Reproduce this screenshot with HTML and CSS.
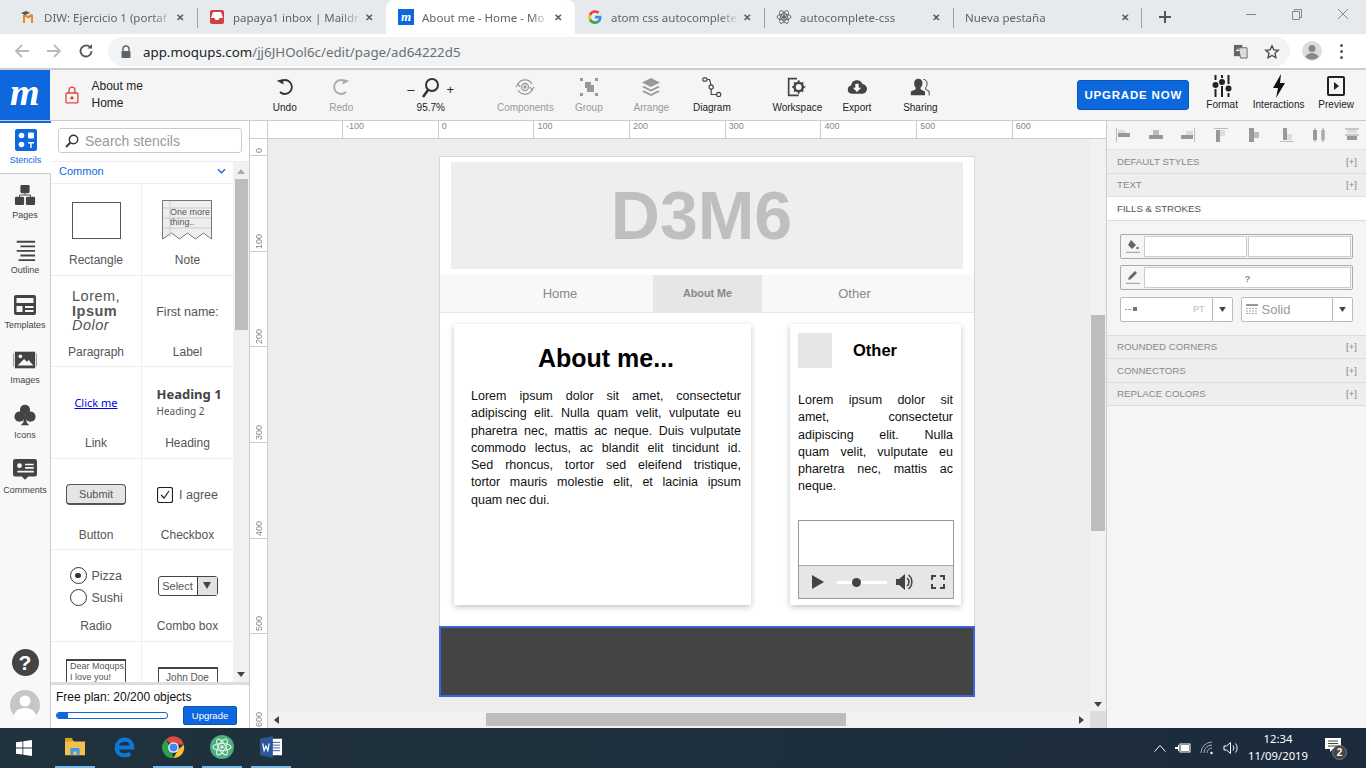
FILE: index.html
```html
<!DOCTYPE html>
<html lang="es">
<head>
  <meta charset="UTF-8" />
  <title>About me - Home - Moqups</title>
  <link rel="stylesheet" href="styles.css">
</head>
<body>
  <!-- Pestañas del navegador -->
  <div class="tabs">
    <div class="tab">
      <svg class="fav" viewBox="0 0 16 16"><path d="M3 14V6l2-1 3 2 3-2 2 1v8h-2V8L8.500 9.500 8 9 5 8v6z" fill="#e8892b"/><path d="M1 4l5-2 4 2-5 2z" fill="#555"/></svg>
      <span class="tab-title">DIW: Ejercicio 1 (portaf</span><span class="tab-x">✕</span>
    </div>
    <div class="tab sep">
      <svg class="fav" viewBox="0 0 16 16"><path d="M1 3a2 2 0 0 1 2-2h10a2 2 0 0 1 2 2v10a2 2 0 0 1-2 2H3a2 2 0 0 1-2-2z" fill="#d23f3f"/><path d="M4 3h8l2 6h-3.500l-1 2h-3l-1-2H2z" fill="#fff"/></svg>
      <span class="tab-title">papaya1 inbox | Maildr</span><span class="tab-x">✕</span>
    </div>
    <div class="tab active">
      <span class="fav fav-m">m</span>
      <span class="tab-title">About me - Home - Mo</span><span class="tab-x">✕</span>
    </div>
    <div class="tab">
      <svg class="fav" viewBox="0 0 16 16"><path d="M14.500 8.200c0-.5 0-1-.1-1.400H8v2.700h3.700a3.200 3.200 0 0 1-1.400 2.100l2.200 1.700c1.300-1.200 2-3 2-5.100z" fill="#4285f4"/><path d="M8 15c1.900 0 3.400-.6 4.500-1.700l-2.200-1.700c-.6.400-1.400.7-2.300.7a4 4 0 0 1-3.800-2.800L1.900 11.200A7 7 0 0 0 8 15z" fill="#34a853"/><path d="M4.200 9.500a4 4 0 0 1 0-2.700L1.900 5a7 7 0 0 0 0 6.200z" fill="#fbbc05"/><path d="M8 3.800c1 0 1.900.4 2.600 1l2-2A7 7 0 0 0 1.900 5l2.300 1.800A4 4 0 0 1 8 3.800z" fill="#ea4335"/></svg>
      <span class="tab-title">atom css autocomplete</span><span class="tab-x">✕</span>
    </div>
    <div class="tab sep">
      <svg class="fav" viewBox="0 0 16 16" fill="none" stroke="#666" stroke-width="1"><ellipse cx="8" cy="8" rx="7" ry="3" transform="rotate(60 8 8)"/><ellipse cx="8" cy="8" rx="7" ry="3" transform="rotate(-60 8 8)"/><ellipse cx="8" cy="8" rx="7" ry="3"/><circle cx="8" cy="8" r="1.500" fill="#666"/></svg>
      <span class="tab-title">autocomplete-css</span><span class="tab-x">✕</span>
    </div>
    <div class="tab sep last">
      <span class="tab-title new">Nueva pestaña</span><span class="tab-x">✕</span>
    </div>
    <span class="tab-plus">
      <svg viewBox="0 0 12 12" width="12" height="12"><path d="M6 0v12M0 6h12" stroke="#555" stroke-width="2"/></svg>
    </span>
    <div class="win-btns">
      <svg viewBox="0 0 12 12" width="12" height="12"><path d="M1 6.500h10" stroke="#888"/></svg>
      <svg viewBox="0 0 12 12" width="12" height="12" fill="none" stroke="#888"><path d="M1.500 3.500h7v8h-7zM3.500 3.500v-2h7v8h-2"/></svg>
      <svg viewBox="0 0 12 12" width="12" height="12"><path d="M1 1l10 10M11 1L1 11" stroke="#888"/></svg>
    </div>
  </div>

  <!-- Barra de direcciones -->
  <div class="urlbar">
    <svg class="nav-ic" viewBox="0 0 16 16" fill="none" stroke="#bbb" stroke-width="1.800"><path d="M15 8H2M8 2L2 8l6 6"/></svg>
    <svg class="nav-ic" viewBox="0 0 16 16" fill="none" stroke="#bbb" stroke-width="1.800"><path d="M1 8h13M8 2l6 6-6 6"/></svg>
    <svg class="nav-ic" viewBox="0 0 16 16" fill="none" stroke="#555" stroke-width="1.800"><path d="M13.500 8a5.500 5.500 0 1 1-1.600-3.900"/><path d="M14 1v4.500H9.500z" fill="#555" stroke="none"/></svg>
    <div class="omnibox">
      <svg class="lock" viewBox="0 0 12 14"><path d="M3 6V4a3 3 0 0 1 6 0v2" fill="none" stroke="#5f6368" stroke-width="1.400"/><rect x="1.500" y="6" width="9" height="7" rx="1" fill="#5f6368"/></svg>
      <span class="url"><b>app.moqups.com</b>/jj6JHOol6c/edit/page/ad64222d5</span>
      <svg class="omni-ic" viewBox="0 0 16 16"><path d="M1 1h9v12H1z" fill="#666"/><path d="M6 4h9v11H8z" fill="#ddd" stroke="#666"/><path d="M3 7h4M5 5v2" stroke="#fff"/></svg>
      <svg class="omni-ic star" viewBox="0 0 16 16" fill="none" stroke="#444" stroke-width="1.300"><path d="M8 1.800l1.900 4 4.400.5-3.300 3 .9 4.400L8 11.500l-3.900 2.200.9-4.400-3.300-3 4.400-.5z"/></svg>
    </div>
    <span class="profile">
      <svg viewBox="0 0 20 20" width="20" height="20"><circle cx="10" cy="10" r="10" fill="#ddd"/><circle cx="10" cy="7.500" r="3.500" fill="#888"/><path d="M3.500 16c1-3 4-4 6.500-4s5.500 1 6.500 4a9 9 0 0 1-13 0z" fill="#888"/></svg>
    </span>
    <span class="dots"><i></i><i></i><i></i></span>
  </div>

  <!-- Barra de herramientas de Moqups -->
  <div class="toolbar">
    <div class="logo">m</div>
    <svg class="red-lock" viewBox="0 0 14 18" fill="none" stroke="#d9453a" stroke-width="1.300"><rect x="1" y="7" width="12" height="10" rx="1"/><path d="M4 7V4a3 3 0 0 1 6 0v3"/><circle cx="7" cy="12" r="1" fill="#d9453a"/></svg>
    <div class="doc-name"><span>About me</span><span>Home</span></div>

    <div class="tool t-undo">
      <svg viewBox="0 0 20 20" fill="none" stroke="#333" stroke-width="1.800"><path d="M5 5a7 7 0 1 1 0 10"/><path d="M2 3h6v5.500z" fill="#333" stroke="none" transform="rotate(-15 5 5)"/></svg>
      <span>Undo</span>
    </div>
    <div class="tool t-redo off">
      <svg viewBox="0 0 20 20" fill="none" stroke="#aaa" stroke-width="1.800"><path d="M15 5a7 7 0 1 0 0 10"/><path d="M18 3h-6v5.500z" fill="#aaa" stroke="none" transform="rotate(15 15 5)"/></svg>
      <span>Redo</span>
    </div>
    <div class="tool t-zoom">
      <div class="zoom-row">
        <b>–</b>
        <svg viewBox="0 0 20 22" fill="none" stroke="#333" stroke-width="2"><circle cx="11" cy="8" r="6"/><path d="M7 13l-5 7" stroke-width="2.500"/></svg>
        <b>+</b>
      </div>
      <span>95.7%</span>
    </div>
    <div class="tool t-comp off">
      <svg viewBox="0 0 20 20" fill="none" stroke="#999" stroke-width="1.300"><path d="M3 7a8 8 0 0 1 14 0M17 13a8 8 0 0 1-14 0"/><circle cx="10" cy="10" r="3.500"/><circle cx="10" cy="10" r="1" fill="#999"/><path d="M1 10l2-3 2 3M15 10l2 3 2-3"/></svg>
      <span>Components</span>
    </div>
    <div class="tool t-group off">
      <svg viewBox="0 0 20 20" fill="#999"><rect x="1" y="1" width="3" height="3"/><rect x="16" y="1" width="3" height="3"/><rect x="1" y="16" width="3" height="3"/><rect x="16" y="16" width="3" height="3"/><rect x="6" y="5" width="6" height="6"/><rect x="8" y="8" width="7" height="7"/></svg>
      <span>Group</span>
    </div>
    <div class="tool t-arrange off">
      <svg viewBox="0 0 20 20" fill="#999"><path d="M10 1l9 4.500-9 4.500-9-4.500z"/><path d="M3 9l7 3.500L17 9l2 1-9 4.500L1 10z"/><path d="M3 13.500L10 17l7-3.500 2 1L10 19l-9-4.500z"/></svg>
      <span>Arrange</span>
    </div>
    <div class="tool t-diagram">
      <svg viewBox="0 0 24 24" fill="none" stroke="#444" stroke-width="1.400"><rect x="1" y="1" width="5" height="4" rx="1.500"/><circle cx="11" cy="12" r="2.500"/><circle cx="20" cy="21" r="2.500"/><path d="M6 3h3l2 7M11 14.500V21h6.500"/></svg>
      <span>Diagram</span>
    </div>
    <div class="tool t-work">
      <svg viewBox="0 0 24 24"><path d="M12 2H2v20h12" fill="none" stroke="#444" stroke-width="2"/><circle cx="14" cy="12" r="5" fill="none" stroke="#444" stroke-width="3"/><path d="M14 4v3M14 17v3M6 12h3M19 12h3M8.500 6.500l2 2M17.500 15.500l2 2M19.500 6.500l-2 2M10.500 15.500l-2 2" stroke="#444" stroke-width="2"/></svg>
      <span>Workspace</span>
    </div>
    <div class="tool t-export">
      <svg viewBox="0 0 24 20"><path d="M6 18a5 5 0 0 1-1-9.900A7 7 0 0 1 18.500 6.500 5.700 5.700 0 0 1 18 18z" fill="#444"/><path d="M10 6h4v5h3l-5 5-5-5h3z" fill="#fff"/></svg>
      <span>Export</span>
    </div>
    <div class="tool t-share">
      <svg viewBox="0 0 24 24"><path d="M10 2c3 0 5 2 5 5 0 3-1 5-2.500 6l.5 2 5 2.500V22H1v-4.500L6.500 15l.5-2C5.500 12 5 10 5 7c0-3 2-5 5-5z" fill="#444"/><path d="M16 3c3 0 4.500 2 4.500 5 0 3-1 4-2 5l.5 2 4 2v5" fill="none" stroke="#444" stroke-width="1.200"/></svg>
      <span>Sharing</span>
    </div>

    <button class="btn-upgrade">UPGRADE NOW</button>

    <div class="tool-r r-format">
      <svg viewBox="0 0 20 24" fill="#222"><rect x="2.500" y="1" width="2" height="5"/><rect x="2.500" y="15" width="2" height="8"/><circle cx="3.500" cy="11" r="3"/><rect x="9" y="1" width="2" height="3"/><rect x="9" y="12" width="2" height="11"/><circle cx="10" cy="8" r="3"/><rect x="15.500" y="1" width="2" height="9"/><rect x="15.500" y="19" width="2" height="4"/><circle cx="16.500" cy="14.500" r="3"/></svg>
      <span>Format</span>
    </div>
    <div class="tool-r r-inter">
      <svg viewBox="0 0 14 24" fill="#111"><path d="M9 0L1 14h5l-2 10 9-15H8z"/></svg>
      <span>Interactions</span>
    </div>
    <div class="tool-r r-prev">
      <svg viewBox="0 0 20 24"><rect x="2" y="3" width="16" height="18" rx="1" fill="none" stroke="#222" stroke-width="2"/><path d="M8 8l5 4-5 4z" fill="#222"/></svg>
      <span>Preview</span>
    </div>
  </div>

  <div class="main">
    <!-- Barra lateral izquierda -->
    <aside class="side">
      <div class="side-item on">
        <svg viewBox="0 0 22 22"><rect width="22" height="22" rx="2" fill="#0d68dd"/><circle cx="6.500" cy="6.500" r="2.800" fill="#fff"/><rect x="13" y="3.500" width="6" height="6" rx="1" fill="#fff"/><circle cx="6.500" cy="15.500" r="2.800" fill="#fff"/><path d="M13 13h6v1.500h-2.300V19h-1.400v-4.500H13z" fill="#fff"/></svg>
        <span>Stencils</span>
      </div>
      <div class="side-item">
        <svg viewBox="0 0 24 24" fill="#444"><rect x="7" y="1" width="10" height="9" rx="1.500"/><rect x="1" y="14" width="10" height="9" rx="1.500"/><rect x="13" y="14" width="10" height="9" rx="1.500"/><path d="M12 10v2M6 14v-2h12v2" fill="none" stroke="#444"/></svg>
        <span>Pages</span>
      </div>
      <div class="side-item">
        <svg viewBox="0 0 24 24" stroke="#444" stroke-width="2"><path d="M3 3h20M7 8h16M3 13h20M7 18h16M5 23h18"/></svg>
        <span>Outline</span>
      </div>
      <div class="side-item">
        <svg viewBox="0 0 24 22"><rect x="1" y="1" width="22" height="20" rx="2" fill="#444"/><rect x="3.500" y="4" width="17" height="5" fill="#f8f8f8"/><rect x="3.500" y="12" width="6" height="6" fill="#f8f8f8"/><rect x="12" y="12" width="8.500" height="2" fill="#f8f8f8"/><rect x="12" y="16" width="8.500" height="2" fill="#f8f8f8"/></svg>
        <span>Templates</span>
      </div>
      <div class="side-item">
        <svg viewBox="0 0 26 20"><rect x="2" y="1" width="22" height="18" fill="#444"/><path d="M0 3v14M26 3v14" stroke="#444" stroke-width="1"/><circle cx="8" cy="6" r="2" fill="#f8f8f8"/><path d="M5 16l7-7 3 3 2-2 5 6z" fill="#f8f8f8"/></svg>
        <span>Images</span>
      </div>
      <div class="side-item">
        <svg viewBox="0 0 26 26" fill="#444"><circle cx="13" cy="7" r="6"/><circle cx="6.500" cy="15" r="6"/><circle cx="19.500" cy="15" r="6"/><path d="M12 13h2l1 9 3 3H8l3-3z"/></svg>
        <span>Icons</span>
      </div>
      <div class="side-item">
        <svg viewBox="0 0 22 20"><path d="M2 0h18a2 2 0 0 1 2 2v12a2 2 0 0 1-2 2h-6l-3 3-3-3H2a2 2 0 0 1-2-2V2a2 2 0 0 1 2-2z" fill="#444"/><circle cx="6" cy="6" r="2.200" fill="#f8f8f8"/><path d="M11 5h8M11 8h8M4 11.500h15" stroke="#f8f8f8" stroke-width="1.500"/></svg>
        <span>Comments</span>
      </div>
      <div class="side-bottom">
        <span class="help">?</span>
        <svg class="avatar" viewBox="0 0 30 30"><circle cx="15" cy="15" r="15" fill="#c6c6c6"/><circle cx="15" cy="11" r="5.500" fill="#fff"/><path d="M4 26c1-6 6-8 11-8s10 2 11 8a15 15 0 0 1-22 0z" fill="#fff"/></svg>
      </div>
    </aside>

    <!-- Panel de stencils -->
    <section class="stencils">
      <div class="search">
        <svg viewBox="0 0 14 14" width="14" height="14" fill="none" stroke="#333" stroke-width="1.400"><circle cx="8.500" cy="5.500" r="4.200"/><path d="M5.500 8.500L1 13" stroke-width="1.800"/></svg>
        <span>Search stencils</span>
      </div>
      <div class="st-body">
        <div class="st-list">
          <div class="st-head">
            <span>Common</span>
            <svg viewBox="0 0 10 6" width="9" height="6" fill="none" stroke="#0d68dd" stroke-width="1.400"><path d="M1 1l4 4 4-4"/></svg>
          </div>
          <div class="st-grid">
            <div class="cell">
              <div class="pv"><div class="pv-rect"></div></div>
              <span class="cell-name">Rectangle</span>
            </div>
            <div class="cell">
              <div class="pv">
                <div class="pv-note">
                  <svg viewBox="0 0 50 40" width="50" height="40"><path d="M.5 39V.5h49V39l-8-6-8 6-8-6-8 6-8-6z" fill="#eee" stroke="#777"/><path d="M8 1v36M1 8h48M1 18h48M1 28h48" stroke="#ccc" fill="none"/></svg>
                  <span>One more<br>thing..</span>
                </div>
              </div>
              <span class="cell-name">Note</span>
            </div>
            <div class="cell">
              <div class="pv"><div class="pv-para">Lorem,<br><b>Ipsum</b><br><i>Dolor</i></div></div>
              <span class="cell-name">Paragraph</span>
            </div>
            <div class="cell">
              <div class="pv"><span class="pv-label">First name:</span></div>
              <span class="cell-name">Label</span>
            </div>
            <div class="cell">
              <div class="pv"><a class="pv-link">Click me</a></div>
              <span class="cell-name">Link</span>
            </div>
            <div class="cell">
              <div class="pv"><div class="pv-head"><b>Heading 1</b><span>Heading 2</span></div></div>
              <span class="cell-name">Heading</span>
            </div>
            <div class="cell">
              <div class="pv"><span class="pv-btn">Submit</span></div>
              <span class="cell-name">Button</span>
            </div>
            <div class="cell">
              <div class="pv">
                <div class="pv-check">
                  <svg viewBox="0 0 16 16" width="16" height="16" fill="none" stroke="#222"><rect x=".5" y=".5" width="15" height="15" rx="2" stroke-width="1.200"/><path d="M4 8l3 3 5-7" stroke-width="1.200"/></svg>
                  <span>I agree</span>
                </div>
              </div>
              <span class="cell-name">Checkbox</span>
            </div>
            <div class="cell">
              <div class="pv">
                <div class="pv-radio">
                  <span class="radio-row"><i class="radio sel"></i>Pizza</span>
                  <span class="radio-row"><i class="radio"></i>Sushi</span>
                </div>
              </div>
              <span class="cell-name">Radio</span>
            </div>
            <div class="cell">
              <div class="pv">
                <div class="pv-combo"><span>Select</span><i><svg viewBox="0 0 8 7" width="8" height="7"><path d="M0 0h8L4 7z" fill="#444"/></svg></i></div>
              </div>
              <span class="cell-name">Combo box</span>
            </div>
            <div class="cell">
              <div class="pv"><div class="pv-area">Dear Moqups,<br>I love you!</div></div>
            </div>
            <div class="cell">
              <div class="pv"><div class="pv-input">John Doe</div></div>
            </div>
          </div>
        </div>
        <div class="st-scroll">
          <svg viewBox="0 0 8 5" width="8" height="5"><path d="M4 0l4 5H0z" fill="#aaa"/></svg>
          <div class="st-thumb"></div>
          <svg class="st-down" viewBox="0 0 8 5" width="8" height="5"><path d="M0 0h8L4 5z" fill="#444"/></svg>
        </div>
      </div>
      <div class="plan">
        <div class="plan-text">Free plan: 20/200 objects</div>
        <div class="plan-row">
          <div class="plan-bar"><div class="plan-fill" style="width:10%"></div></div>
          <button class="plan-btn">Upgrade</button>
        </div>
      </div>
    </section>

    <!-- Lienzo -->
    <section class="stage">
      <div class="ruler-corner"></div>
      <div class="ruler-top">
        <span class="rt first"></span><span class="rt">-100</span><span class="rt">0</span><span class="rt">100</span><span class="rt">200</span><span class="rt">300</span><span class="rt">400</span><span class="rt">500</span><span class="rt">600</span>
      </div>
      <div class="ruler-left">
        <span class="rl first"><em>0</em></span><span class="rl"><em>100</em></span><span class="rl"><em>200</em></span><span class="rl"><em>300</em></span><span class="rl"><em>400</em></span><span class="rl"><em>500</em></span><span class="rl"><em>600</em></span>
      </div>
      <div class="canvas">
        <div class="work">
          <div class="mock">
            <div class="mock-head"><div class="mock-logo">D3M6</div></div>
            <div class="mock-nav">
              <span class="mn-home">Home</span>
              <span class="mn-about">About Me</span>
              <span class="mn-other">Other</span>
            </div>
            <div class="mock-body">
              <article class="card-main">
                <h2>About me...</h2>
                <p>
                  <span class="ln">Lorem ipsum dolor sit amet, consectetur</span>
                  <span class="ln">adipiscing elit. Nulla quam velit, vulputate eu</span>
                  <span class="ln">pharetra nec, mattis ac neque. Duis vulputate</span>
                  <span class="ln">commodo lectus, ac blandit elit tincidunt id.</span>
                  <span class="ln">Sed rhoncus, tortor sed eleifend tristique,</span>
                  <span class="ln">tortor mauris molestie elit, et lacinia ipsum</span>
                  <span class="ln end">quam nec dui.</span>
                </p>
              </article>
              <article class="card-side">
                <div class="cs-head"><div class="cs-img"></div><h3>Other</h3></div>
                <p>
                  <span class="ln">Lorem ipsum dolor sit</span>
                  <span class="ln">amet, consectetur</span>
                  <span class="ln">adipiscing elit. Nulla</span>
                  <span class="ln">quam velit, vulputate eu</span>
                  <span class="ln">pharetra nec, mattis ac</span>
                  <span class="ln end">neque.</span>
                </p>
                <div class="video">
                  <div class="video-screen"></div>
                  <div class="video-bar">
                    <svg viewBox="0 0 12 14" width="12" height="14"><path d="M0 0l12 7-12 7z" fill="#444"/></svg>
                    <div class="video-track"><i></i></div>
                    <svg viewBox="0 0 18 18" width="18" height="18" fill="none" stroke="#444" stroke-width="1.500"><path d="M1 6h3l6-5v16l-6-5H1z" fill="#444" stroke="none"/><path d="M12 5a5 5 0 0 1 0 8M13.500 2a9 9 0 0 1 0 14"/></svg>
                    <svg class="fs" viewBox="0 0 14 14" width="14" height="14" fill="none" stroke="#444" stroke-width="2"><path d="M1 5V1h4M9 1h4v4M13 9v4H9M5 13H1V9"/></svg>
                  </div>
                </div>
              </article>
            </div>
            <div class="mock-foot"></div>
          </div>
        </div>
        <div class="vscroll">
          <div class="vthumb"></div>
          <svg class="v-down" viewBox="0 0 8 5" width="8" height="5"><path d="M0 0h8L4 5z" fill="#444"/></svg>
        </div>
        <div class="hscroll">
          <svg viewBox="0 0 5 8" width="5" height="8"><path d="M5 0v8L0 4z" fill="#444"/></svg>
          <div class="hthumb"></div>
          <svg class="h-right" viewBox="0 0 5 8" width="5" height="8"><path d="M0 0v8l5-4z" fill="#444"/></svg>
        </div>
        <div class="corner"></div>
      </div>
    </section>

    <!-- Panel derecho -->
    <aside class="props">
      <div class="aligns">
        <svg viewBox="0 0 14 14"><path d="M.5 0v14" stroke="#bbb"/><rect x="2" y="5" width="12" height="4" fill="#999"/><rect x="2" y="2" width="7" height="3" fill="#ddd"/></svg>
        <svg viewBox="0 0 14 14"><rect x="0" y="7" width="14" height="4" fill="#999"/><rect x="4" y="2" width="6" height="5" fill="#bbb"/></svg>
        <svg viewBox="0 0 14 14"><path d="M13.500 0v14" stroke="#bbb"/><rect x="0" y="7" width="12" height="4" fill="#999"/><rect x="5" y="3" width="7" height="4" fill="#ddd"/></svg>
        <svg viewBox="0 0 14 14"><path d="M0 .5h14" stroke="#bbb"/><rect x="2" y="2" width="4" height="12" fill="#999"/><rect x="6" y="2" width="5" height="6" fill="#ddd"/></svg>
        <svg viewBox="0 0 14 14"><rect x="2" y="0" width="5" height="14" fill="#999"/><rect x="7" y="4" width="5" height="6" fill="#bbb"/></svg>
        <svg viewBox="0 0 14 14"><path d="M0 13.500h14" stroke="#bbb"/><rect x="3" y="0" width="4" height="12" fill="#999"/><rect x="7" y="6" width="5" height="6" fill="#ddd"/></svg>
        <svg viewBox="0 0 14 14"><rect x="1" y="2" width="4" height="10" fill="#999"/><rect x="9" y="2" width="4" height="10" fill="#bbb"/><path d="M3 0v14M11 0v14" stroke="#999"/></svg>
        <svg viewBox="0 0 14 14"><rect x="2" y="8" width="10" height="4" fill="#999"/><rect x="2" y="2" width="10" height="3" fill="#ddd"/><path d="M0 1h14M0 7h14" stroke="#999"/></svg>
      </div>
      <div class="acc"><span>DEFAULT STYLES</span><em>[+]</em></div>
      <div class="acc"><span>TEXT</span><em>[+]</em></div>
      <div class="acc open"><span>FILLS &amp; STROKES</span></div>
      <div class="fills">
        <div class="f-row">
          <span class="f-ic">
            <svg viewBox="0 0 14 14" width="14" height="14"><path d="M5 1l5 5-4 4-4-4z" fill="#666"/><circle cx="11.500" cy="9" r="1.200" fill="#666"/><path d="M0 13.500h14" stroke="#aaa" stroke-width="1.500"/></svg>
          </span>
          <span class="f-cell"></span><span class="f-cell"></span>
        </div>
        <div class="f-row">
          <span class="f-ic">
            <svg viewBox="0 0 14 14" width="14" height="14"><path d="M2 10l1-3 6-6 2 2-6 6z" fill="#666"/><path d="M0 13.500h14" stroke="#aaa" stroke-width="1.500"/></svg>
          </span>
          <span class="f-cell q">?</span>
        </div>
        <div class="f-split">
          <div class="f-sel">
            <span class="f-val">
              <svg viewBox="0 0 12 4" width="12" height="4"><path d="M0 2.500h2M3.500 2.500h3" stroke="#999"/><rect x="8" y="0" width="4" height="4" fill="#777"/></svg>
              <small>PT</small>
            </span>
            <i><svg viewBox="0 0 8 6" width="7" height="5"><path d="M0 0h8L4 6z" fill="#444"/></svg></i>
          </div>
          <div class="f-sel">
            <span class="f-val solid">
              <svg viewBox="0 0 12 10" width="12" height="10"><path d="M0 1h12" stroke="#777" stroke-width="1.500"/><path d="M0 4.500h12M0 7h12M0 9.500h12" stroke="#aaa" stroke-dasharray="2 1"/></svg>
              Solid
            </span>
            <i><svg viewBox="0 0 8 6" width="7" height="5"><path d="M0 0h8L4 6z" fill="#444"/></svg></i>
          </div>
        </div>
      </div>
      <div class="acc"><span>ROUNDED CORNERS</span><em>[+]</em></div>
      <div class="acc"><span>CONNECTORS</span><em>[+]</em></div>
      <div class="acc"><span>REPLACE COLORS</span><em>[+]</em></div>
    </aside>
  </div>

  <!-- Barra de tareas -->
  <footer class="taskbar">
    <svg class="win" viewBox="0 0 16 16" width="16" height="16" fill="#fff"><path d="M0 2.300l6.500-.9v6.200H0zM7.300 1.300L16 0v7.600H7.300zM0 8.400h6.500v6.200L0 13.700zM7.300 8.400H16V16l-8.700-1.300z"/></svg>
    <div class="task lit">
      <svg viewBox="0 0 24 22" width="22" height="20"><path d="M1 3h8l2 2h12v15H1z" fill="#f3c14f"/><path d="M1 1h8v4H1z" fill="#d9a02c"/><path d="M7 12h10v8h-3v-4h-4v4H7z" fill="#3d9be9"/></svg>
    </div>
    <div class="task">
      <svg viewBox="0 0 24 24" width="22" height="22" fill="none" stroke="#0a78d7" stroke-width="4.500"><path d="M5 12.500h16c0-5-3-8.500-8-8.500-5.500 0-9 4-9 9 0 5.500 4 8 8.500 8 2.500 0 4.500-.5 6.500-1.500"/></svg>
    </div>
    <div class="task lit">
      <svg viewBox="0 0 24 24" width="23" height="23"><path d="M12 12L4.200 3.500A11 11 0 0 1 22.700 9H12z" fill="#e04a3f"/><path d="M12 23A11 11 0 0 1 4.200 3.500L9 13z" fill="#2f9e4f"/><path d="M22.700 9A11 11 0 0 1 12 23l5-9z" fill="#fbc531"/><circle cx="12" cy="12" r="5.500" fill="#fff"/><circle cx="12" cy="12" r="4.200" fill="#4285f4"/></svg>
    </div>
    <div class="task lit">
      <svg viewBox="0 0 24 24" width="24" height="24"><circle cx="12" cy="12" r="12" fill="#4caf7d"/><g fill="none" stroke="#e4f5ea" stroke-width="1.100"><ellipse cx="12" cy="12" rx="9" ry="3.500" transform="rotate(60 12 12)"/><ellipse cx="12" cy="12" rx="9" ry="3.500" transform="rotate(-60 12 12)"/><ellipse cx="12" cy="12" rx="9" ry="3.500"/></g><circle cx="12" cy="12" r="1.800" fill="#e4f5ea"/></svg>
    </div>
    <div class="task lit">
      <svg viewBox="0 0 24 24" width="22" height="22"><rect x="9" y="3" width="15" height="18" fill="#fff"/><path d="M13 7h9M13 10h9M13 13h9M13 16h9" stroke="#2b579a"/><path d="M0 3l14-3v24L0 21z" fill="#2b579a"/><path d="M3 8l1.500 8 2-5 2 5L10 8" fill="none" stroke="#fff" stroke-width="1.300"/></svg>
    </div>
    <div class="tray">
      <svg viewBox="0 0 12 7" width="12" height="7" fill="none" stroke="#fff"><path d="M.5 6.500l5.500-6 5.500 6"/></svg>
      <svg viewBox="0 0 16 10" width="16" height="10" fill="#fff"><rect x="5" y="1" width="10" height="8" fill="none" stroke="#fff"/><rect x="6" y="2" width="8" height="6"/><path d="M0 4h3V2h1v6H3V6H0z"/></svg>
      <svg viewBox="0 0 14 14" width="14" height="14" fill="none" stroke="#aaa"><path d="M1 12A11 11 0 0 1 12 1M4 12a8 8 0 0 1 8-8M7 12a5 5 0 0 1 5-5"/><circle cx="11.500" cy="12" r="1.200" fill="#fff" stroke="none"/></svg>
      <svg viewBox="0 0 16 14" width="16" height="14" fill="none" stroke="#fff"><path d="M1 5h2.500l4-3.500v11l-4-3.500H1z"/><path d="M10 4.500a4 4 0 0 1 0 5M12.500 2.500a7 7 0 0 1 0 9"/></svg>
      <div class="clock"><span>12:34</span><span>11/09/2019</span></div>
      <div class="notif">
        <svg viewBox="0 0 16 15" width="16" height="15"><path d="M0 0h16v11H8l-3 3v-3H0z" fill="#fff"/><path d="M3 3h10M3 5.500h10M3 8h10" stroke="#444"/></svg>
        <span class="badge">2</span>
      </div>
    </div>
  </footer>
</body>
</html>
```

FILE: styles.css
```css
* {
  box-sizing: border-box;
}
html, body {
  margin: 0;
  height: 768px;
  overflow: hidden;
}
body {
  width: 1366px;
  display: flex;
  flex-direction: column;
  font-family: "Liberation Sans", Arial, sans-serif;
  background: #fff;
  color: #333;
}

/* Pestañas */
.tabs {
  height: 34px;
  flex: none;
  display: flex;
  align-items: stretch;
  padding-left: 8px;
  background: #e7eaed;
  font-family: "Noto Sans", sans-serif;
  font-size: 11.500px;
  color: #5f6368;
}
.tab {
  width: 189px;
  display: flex;
  align-items: center;
  padding-left: 12px;
  position: relative;
}
.tab.sep::before, .tab.last::after {
  content: "";
  position: absolute;
  left: 0;
  top: 8px;
  height: 20px;
  width: 1px;
  background: #9aa0a6;
}
.tab.last::after {
  left: auto;
  right: 0;
}
.tab.active {
  background: #fff;
  border-radius: 8px 8px 0 0;
  color: #5f6368;
}
.fav {
  width: 16px;
  height: 16px;
  flex: none;
  margin-right: 8px;
}
.fav-m {
  background: #0d68dd;
  color: #fff;
  font: italic bold 13px/15px "Liberation Serif", serif;
  text-align: center;
}
.tab-title {
  width: 128px;
  white-space: nowrap;
  overflow: hidden;
  -webkit-mask-image: linear-gradient(90deg, #000 85%, transparent);
  mask-image: linear-gradient(90deg, #000 85%, transparent);
}
.tab-title.new {
  width: 152px;
}
.tab-x {
  width: 12px;
  margin-left: 4px;
  font-size: 10px;
  font-weight: bold;
  color: #5a5a5a;
}
.tab-plus {
  margin-left: 17px;
  display: flex;
  align-items: center;
}
.win-btns {
  margin-left: 74px;
  display: flex;
  gap: 34px;
  padding-top: 8px;
  height: 20px;
}

/* Barra de direcciones */
.urlbar {
  height: 36px;
  flex: none;
  display: flex;
  align-items: center;
  padding-left: 14px;
  gap: 16px;
  background: #fff;
  border-bottom: 2px solid #ccc;
}
.nav-ic {
  width: 16px;
  height: 16px;
  flex: none;
}
.omnibox {
  width: 1182px;
  height: 29px;
  margin-top: 1px;
  margin-left: -2px;
  border-radius: 15px;
  background: #f1f3f4;
  display: flex;
  align-items: center;
  padding-left: 12px;
}
.lock {
  width: 12px;
  height: 14px;
  margin-right: 11px;
}
.url {
  font-family: "Noto Sans", sans-serif;
  font-size: 13.300px;
  color: #6b6f73;
  flex: 1;
}
.url b {
  font-weight: normal;
  color: #222;
}
.omni-ic {
  width: 15px;
  height: 15px;
  margin-right: 16px;
}
.omni-ic.star {
  width: 16px;
  height: 16px;
  margin-right: 10px;
}
.profile {
  display: flex;
  margin-left: -4px;
}
.dots {
  display: flex;
  flex-direction: column;
  gap: 3px;
  margin-left: 2px;
}
.dots i {
  width: 3px;
  height: 3px;
  border-radius: 50%;
  background: #555;
}

/* Toolbar */
.toolbar {
  height: 51px;
  flex: none;
  display: flex;
  align-items: stretch;
  background: #f5f5f5;
  border-bottom: 1px solid #ccc;
}
.logo {
  width: 50px;
  background: #0d68dd;
  color: #fff;
  font: italic bold 38px/44px "Liberation Serif", serif;
  text-align: center;
}
.red-lock {
  width: 14px;
  height: 18px;
  margin: 16px 0 0 15px;
}
.doc-name {
  width: 64px;
  margin-left: 13px;
  padding-top: 8px;
  display: flex;
  flex-direction: column;
  font-size: 12px;
  line-height: 17px;
  color: #222;
}
.tool, .tool-r {
  width: 60px;
  display: flex;
  flex-direction: column;
  align-items: center;
  justify-content: flex-end;
  padding-bottom: 7px;
  font-size: 10px;
  line-height: 11px;
  color: #222;
  white-space: nowrap;
}
.tool svg {
  width: 20px;
  height: 20px;
  margin-bottom: 5px;
}
.tool.off {
  color: #999;
}
.t-undo { margin-left: 100px; }
.t-redo { margin-left: -3px; }
.t-zoom { margin-left: 30px; }
.t-comp { margin-left: 35px; }
.t-group { margin-left: 4px; }
.t-arrange { margin-left: 3px; }
.t-diagram { margin-left: 1px; }
.t-work { margin-left: 26px; }
.t-export { margin-left: 0; }
.t-share { margin-left: 4px; }
.zoom-row {
  display: flex;
  align-items: center;
  gap: 6px;
  font-size: 13px;
}
.zoom-row b {
  font-weight: normal;
}
.tool .zoom-row svg {
  width: 20px;
  height: 22px;
  margin-bottom: 3px;
}
.btn-upgrade {
  width: 113px;
  height: 30px;
  margin: 10px 0 0 127px;
  border: 1px solid #0a56b8;
  border-radius: 3px;
  background: #0d68dd;
  color: #fff;
  font: bold 11.500px "Liberation Sans", sans-serif;
  letter-spacing: .8px;
}
.tool-r {
  justify-content: flex-start;
  padding: 4px 0 0;
}
.tool-r svg {
  width: 22px;
  height: 24px;
  margin-bottom: 1px;
}
.r-format { margin-left: 3px; }
.r-inter { margin-left: -3px; }
.r-prev { margin-left: -2px; }

/* Contenido */
.main {
  flex: 1;
  display: flex;
  min-height: 0;
}

/* Barra lateral */
.side {
  width: 51px;
  flex: none;
  display: flex;
  flex-direction: column;
  background: #f8f8f8;
  border-right: 1px solid #ccc;
}
.side-item {
  height: 55px;
  display: flex;
  flex-direction: column;
  align-items: center;
  padding-top: 8px;
  font-size: 9px;
  color: #444;
  white-space: nowrap;
}
.side-item svg {
  width: 24px;
  height: 22px;
  margin-bottom: 4px;
}
.side-item.on {
  height: 53px;
  background: #fff;
  color: #0d68dd;
  border-top: 2px solid #0d68dd;
  border-bottom: 1px solid #ccc;
  margin-right: -1px;
  padding-top: 6px;
  margin-bottom: 2px;
}
.side-bottom {
  margin-top: auto;
  display: flex;
  flex-direction: column;
  align-items: center;
  gap: 14px;
  padding-bottom: 8px;
}
.help {
  width: 27px;
  height: 27px;
  border-radius: 50%;
  background: #444;
  color: #fff;
  font: bold 21px/27px "Liberation Sans", sans-serif;
  text-align: center;
}
.avatar {
  width: 30px;
  height: 30px;
}

/* Stencils */
.stencils {
  width: 199px;
  flex: none;
  display: flex;
  flex-direction: column;
  background: #fff;
  border-right: 1px solid #ccc;
}
.search {
  height: 25px;
  margin: 7px 7px 8px;
  flex: none;
  display: flex;
  align-items: center;
  gap: 6px;
  padding-left: 6px;
  border: 1px solid #ccc;
  border-radius: 3px;
  font-size: 14px;
  color: #999;
}
.st-body {
  flex: 1;
  display: flex;
  min-height: 0;
  border-top: 1px solid #eee;
}
.st-list {
  width: 182px;
  overflow: hidden;
}
.st-head {
  height: 22px;
  display: flex;
  align-items: center;
  justify-content: space-between;
  padding: 0 7px 3px 8px;
  font-size: 11px;
  color: #0d68dd;
  border-bottom: 1px solid #eee;
}
.st-grid {
  display: grid;
  grid-template-columns: 90px 91px;
  grid-auto-rows: 91.500px;
  column-gap: 1px;
}
.cell {
  position: relative;
  display: flex;
  flex-direction: column;
  align-items: center;
  border-bottom: 1px solid #eee;
}
.cell:nth-child(odd)::after {
  content: "";
  position: absolute;
  right: -1px;
  top: 0;
  bottom: -1px;
  width: 1px;
  background: #eee;
}
.pv {
  height: 73px;
  width: 100%;
  flex: none;
  display: flex;
  align-items: center;
  justify-content: center;
  color: #555;
}
.cell-name {
  margin-top: -6px;
  font-size: 12px;
  line-height: 18px;
  color: #555;
}
.pv-rect {
  width: 49px;
  height: 37px;
  border: 1.500px solid #555;
}
.pv-note {
  position: relative;
  width: 50px;
  height: 40px;
  margin: -2px 1px 0 0;
}
.pv-note svg {
  display: block;
}
.pv-note span {
  position: absolute;
  left: 8px;
  top: 7px;
  font-size: 9px;
  line-height: 10.500px;
  white-space: nowrap;
}
.pv-para {
  width: 48px;
  font-size: 14.500px;
  line-height: 14.800px;
  letter-spacing: .5px;
  white-space: nowrap;
  padding-bottom: 2px;
}
.pv-label {
  font-size: 12.500px;
}
.pv-link {
  font-family: "Noto Sans", sans-serif;
  font-size: 11px;
  color: #00e;
  text-decoration: underline;
  margin-top: -2px;
}
.pv-head {
  width: 62px;
  display: flex;
  flex-direction: column;
  font-family: "Noto Sans", sans-serif;
  white-space: nowrap;
  gap: 1px;
  margin-top: -4px;
}
.pv-head b {
  font-size: 13px;
  line-height: 18px;
  color: #444;
}
.pv-head span {
  font-size: 10px;
  line-height: 15px;
}
.pv-btn {
  width: 60px;
  height: 21px;
  margin-top: -2px;
  border: 1px solid #555;
  border-bottom-width: 2px;
  border-radius: 4px;
  background: #e5e5e5;
  font-size: 11px;
  line-height: 18px;
  text-align: center;
}
.pv-check {
  display: flex;
  align-items: center;
  gap: 6px;
  font-size: 12.500px;
}
.pv-radio {
  display: flex;
  flex-direction: column;
  gap: 6px;
  font-size: 12.500px;
  width: 56px;
  margin-left: 3px;
}
.radio-row {
  display: flex;
  align-items: center;
  gap: 5px;
  height: 16px;
}
.radio {
  width: 17px;
  height: 17px;
  flex: none;
  border: 1.200px solid #333;
  border-radius: 50%;
  position: relative;
}
.radio.sel::after {
  content: "";
  position: absolute;
  left: 4.500px;
  top: 4.500px;
  width: 5.500px;
  height: 5.500px;
  border-radius: 50%;
  background: #333;
}
.pv-combo {
  width: 60px;
  height: 20px;
  margin-top: -2px;
  display: flex;
  border: 1px solid #444;
  border-radius: 3px;
  font-size: 11px;
  line-height: 18px;
}
.pv-combo span {
  width: 38px;
  text-align: center;
}
.pv-combo i {
  flex: 1;
  background: #e2e2e2;
  border-left: 1px solid #444;
  display: flex;
  align-items: center;
  justify-content: center;
}
.pv-area {
  width: 60px;
  height: 36px;
  margin-top: -2px;
  border: 1px solid #444;
  border-top-width: 2px;
  padding: 0 3px;
  font-size: 9px;
  line-height: 10.500px;
  white-space: nowrap;
}
.pv-input {
  width: 60px;
  height: 22px;
  margin-top: -1px;
  border: 1px solid #444;
  border-top-width: 2px;
  font-size: 10px;
  line-height: 18px;
  text-align: center;
}
.st-scroll {
  flex: 1;
  margin-left: 0;
  padding-top: 7px;
  background: #f1f1f1;
  display: flex;
  flex-direction: column;
  align-items: center;
  position: relative;
}
.st-thumb {
  width: 13px;
  height: 151px;
  margin-top: 5px;
  background: #bdbdbd;
}
.st-down {
  margin-top: auto;
  margin-bottom: 5px;
}
.plan {
  height: 46px;
  flex: none;
  padding: 5px 12px 0 5px;
  border-top: 3px solid #ddd;
  background: #fff;
}
.plan-text {
  font-size: 12px;
  line-height: 14px;
  color: #111;
}
.plan-row {
  display: flex;
  align-items: center;
  justify-content: space-between;
  margin-top: 2px;
}
.plan-bar {
  width: 112px;
  height: 7px;
  border: 1px solid #0d68dd;
  border-radius: 3px;
  overflow: hidden;
}
.plan-fill {
  height: 100%;
  background: #0d68dd;
}
.plan-btn {
  width: 54px;
  height: 19px;
  padding: 0;
  border: 1px solid #0a56b8;
  border-radius: 2px;
  background: #0d68dd;
  color: #fff;
  font: 9.500px "Liberation Sans", sans-serif;
}

/* Lienzo */
.stage {
  width: 856px;
  flex: none;
  display: grid;
  grid-template-columns: 18px 838px;
  grid-template-rows: 18px 589px;
  background: #fff;
}
.ruler-corner {
  border-bottom: 1px solid #ccc;
  border-right: 1px solid #ccc;
}
.ruler-top {
  display: flex;
  border-bottom: 1px solid #ccc;
  overflow: hidden;
}
.rt {
  flex: none;
  width: 95.700px;
  padding: 0 0 0 3px;
  font-size: 9px;
  line-height: 10px;
  color: #888;
  border-left: 1px solid #ccc;
}
.rt.first {
  width: 74px;
  border-left: none;
}
.ruler-left {
  display: flex;
  flex-direction: column;
  border-right: 1px solid #ccc;
  overflow: hidden;
}
.rl {
  flex: none;
  height: 95.700px;
  display: flex;
  justify-content: center;
  align-items: flex-end;
  padding-bottom: 2px;
  border-bottom: 1px solid #ccc;
}
.rl.first {
  height: 17px;
}
.rl em {
  font-style: normal;
  font-size: 9px;
  line-height: 10px;
  color: #888;
  writing-mode: vertical-rl;
  transform: rotate(180deg);
}
.canvas {
  display: grid;
  grid-template-columns: 822px 16px;
  grid-template-rows: 572px 17px;
  min-height: 0;
}
.work {
  background: #ededed;
  padding: 17px 0 0 171px;
  overflow: hidden;
}
.mock {
  width: 536px;
  height: 541px;
  display: flex;
  flex-direction: column;
  background: #fff;
  border: 1px solid #d8d8d8;
  border-bottom: none;
}
.mock-head {
  padding: 5px 11px 6px;
  flex: none;
}
.mock-logo {
  height: 107px;
  padding-right: 11px;
  background: #eee;
  color: #bfbfbf;
  font-weight: bold;
  font-size: 68px;
  line-height: 107px;
  text-align: center;
}
.mock-nav {
  height: 38px;
  flex: none;
  display: flex;
  background: #f8f8f8;
  border-bottom: 1px solid #e8e8e8;
  color: #888;
  font-size: 13px;
  line-height: 37px;
  text-align: center;
}
.mn-home {
  width: 213px;
  padding-left: 27px;
}
.mn-about {
  width: 109px;
  background: #e6e6e6;
  font-size: 10.800px;
  font-weight: bold;
}
.mn-other {
  flex: 1;
  padding-right: 27px;
}
.mock-body {
  flex: 1;
  display: flex;
  padding: 11px 13px 21px 14px;
  min-height: 0;
  gap: 39px;
}
.mock-body article {
  box-shadow: 0 2px 6px rgba(0, 0, 0, .24);
  background: #fff;
  color: #111;
  font-size: 12.500px;
  line-height: 17.250px;
}
.card-main {
  width: 297px;
  padding: 18px 10px 0 17px;
}
.card-main h2 {
  margin: 0 0 13px;
  font-size: 25px;
  line-height: 33px;
  color: #000;
  text-align: center;
}
.card-main p, .card-side p {
  margin: 0;
}
/* cada linea va aparte para que corte igual que el original */
.ln {
  display: block;
  white-space: nowrap;
  text-align: justify;
  text-align-last: justify;
}
.ln.end {
  text-align-last: left;
}
.card-side {
  width: 171px;
  padding: 9px 8px 6px;
  display: flex;
  flex-direction: column;
}
.cs-head {
  display: flex;
  height: 35px;
  margin-bottom: 24px;
}
.cs-img {
  width: 34px;
  height: 35px;
  background: #e6e6e6;
}
.cs-head h3 {
  margin: 0 0 0 21px;
  font-size: 16.500px;
  line-height: 34px;
  color: #000;
}
.video {
  width: 156px;
  height: 79px;
  margin-top: auto;
  border: 1px solid #999;
  display: flex;
  flex-direction: column;
}
.video-screen {
  height: 45px;
  border-bottom: 1px solid #aaa;
}
.video-bar {
  flex: 1;
  background: #e6e6e6;
  display: flex;
  align-items: center;
  padding-left: 13px;
}
.video-track {
  width: 50px;
  height: 3px;
  margin: 0 8px 0 13px;
  background: #fff;
  position: relative;
}
.video-track i {
  position: absolute;
  left: 15px;
  top: -3px;
  width: 9px;
  height: 9px;
  border-radius: 50%;
  background: #444;
}
.fs {
  margin-left: 18px;
}
.mock-foot {
  height: 71px;
  flex: none;
  margin: 0 -1px;
  background: #444;
  border: 2px solid #3b64d8;
}
.vscroll {
  background: #f1f1f1;
  display: flex;
  flex-direction: column;
  align-items: center;
}
.vthumb {
  width: 14px;
  height: 216px;
  margin-top: 176px;
  background: #bdbdbd;
}
.v-down {
  margin-top: auto;
  margin-bottom: 4px;
}
.hscroll {
  display: flex;
  align-items: center;
  padding-left: 6px;
  background: #f1f1f1;
}
.hthumb {
  width: 360px;
  height: 13px;
  margin-left: 207px;
  background: #bdbdbd;
}
.h-right {
  margin-left: auto;
  margin-right: 6px;
}
.corner {
  background: #dcdcdc;
}

/* Panel derecho */
.props {
  flex: 1;
  background: #f5f5f5;
  border-left: 1px solid #ccc;
}
.aligns {
  height: 29px;
  display: flex;
  align-items: center;
  justify-content: space-between;
  padding: 0 7px 0 9px;
  border-bottom: 1px solid #e4e4e4;
}
.aligns svg {
  width: 14px;
  height: 14px;
}
.acc {
  height: 23.500px;
  display: flex;
  align-items: center;
  justify-content: space-between;
  padding: 0 9px 0 10px;
  background: #eee;
  border-bottom: 1px solid #dcdcdc;
  font-size: 9.700px;
  color: #888;
}
.acc em {
  font-style: normal;
}
.acc.open {
  background: #fff;
  color: #555;
}
.fills {
  height: 115px;
  padding: 13px 13px 0;
  display: flex;
  flex-direction: column;
  gap: 6px;
  border-bottom: 1px solid #dcdcdc;
}
.f-row {
  height: 25px;
  display: flex;
  gap: 1px;
  padding: 1px;
  border: 1px solid #aaa;
  border-radius: 2px;
  background: #f5f5f5;
}
.f-ic {
  width: 21px;
  flex: none;
  display: flex;
  align-items: center;
  justify-content: center;
}
.f-cell {
  flex: 1;
  background: #fff;
  border: 1px solid #ccc;
}
.f-cell.q {
  font-size: 9px;
  font-weight: bold;
  line-height: 22px;
  text-align: center;
  color: #888;
}
.f-split {
  display: flex;
  gap: 8px;
  margin-top: 1px;
}
.f-sel {
  width: 112.500px;
  height: 25px;
  display: flex;
  background: #fff;
  border: 1px solid #bbb;
  border-radius: 2px;
}
.f-sel i {
  width: 20px;
  flex: none;
  border-left: 1px solid #bbb;
  display: flex;
  align-items: center;
  justify-content: center;
}
.f-val {
  flex: 1;
  display: flex;
  align-items: center;
  justify-content: space-between;
  padding: 0 7px 0 4px;
}
.f-val small {
  font-size: 9px;
  font-weight: bold;
  color: #ccc;
}
.f-val.solid {
  justify-content: flex-start;
  gap: 4px;
  font-size: 13px;
  color: #999;
}

/* Barra de tareas */
.taskbar {
  height: 40px;
  flex: none;
  display: flex;
  align-items: center;
  background: linear-gradient(90deg, #20323c, #1b2b3d);
  color: #fff;
}
.win {
  margin: 0 23px 0 16px;
}
.task {
  width: 40px;
  height: 40px;
  margin-right: 9px;
  display: flex;
  align-items: center;
  justify-content: center;
  border-bottom: 2px solid transparent;
}
.task.lit {
  border-bottom-color: #76b9ed;
}
.tray {
  margin-left: auto;
  display: flex;
  align-items: center;
  gap: 9px;
  padding-right: 25px;
}
.clock {
  width: 68px;
  margin: 0 4px 0 -4px;
  padding-bottom: 2px;
  display: flex;
  flex-direction: column;
  align-items: center;
  font-family: "Noto Sans", sans-serif;
  font-size: 11.300px;
  line-height: 17px;
  white-space: nowrap;
}
.notif {
  position: relative;
  height: 20px;
}
.badge {
  position: absolute;
  left: 7px;
  top: 7px;
  width: 15px;
  height: 15px;
  border-radius: 50%;
  background: #444;
  border: 1px solid #777;
  font-size: 10px;
  font-weight: bold;
  line-height: 13px;
  text-align: center;
}
```
